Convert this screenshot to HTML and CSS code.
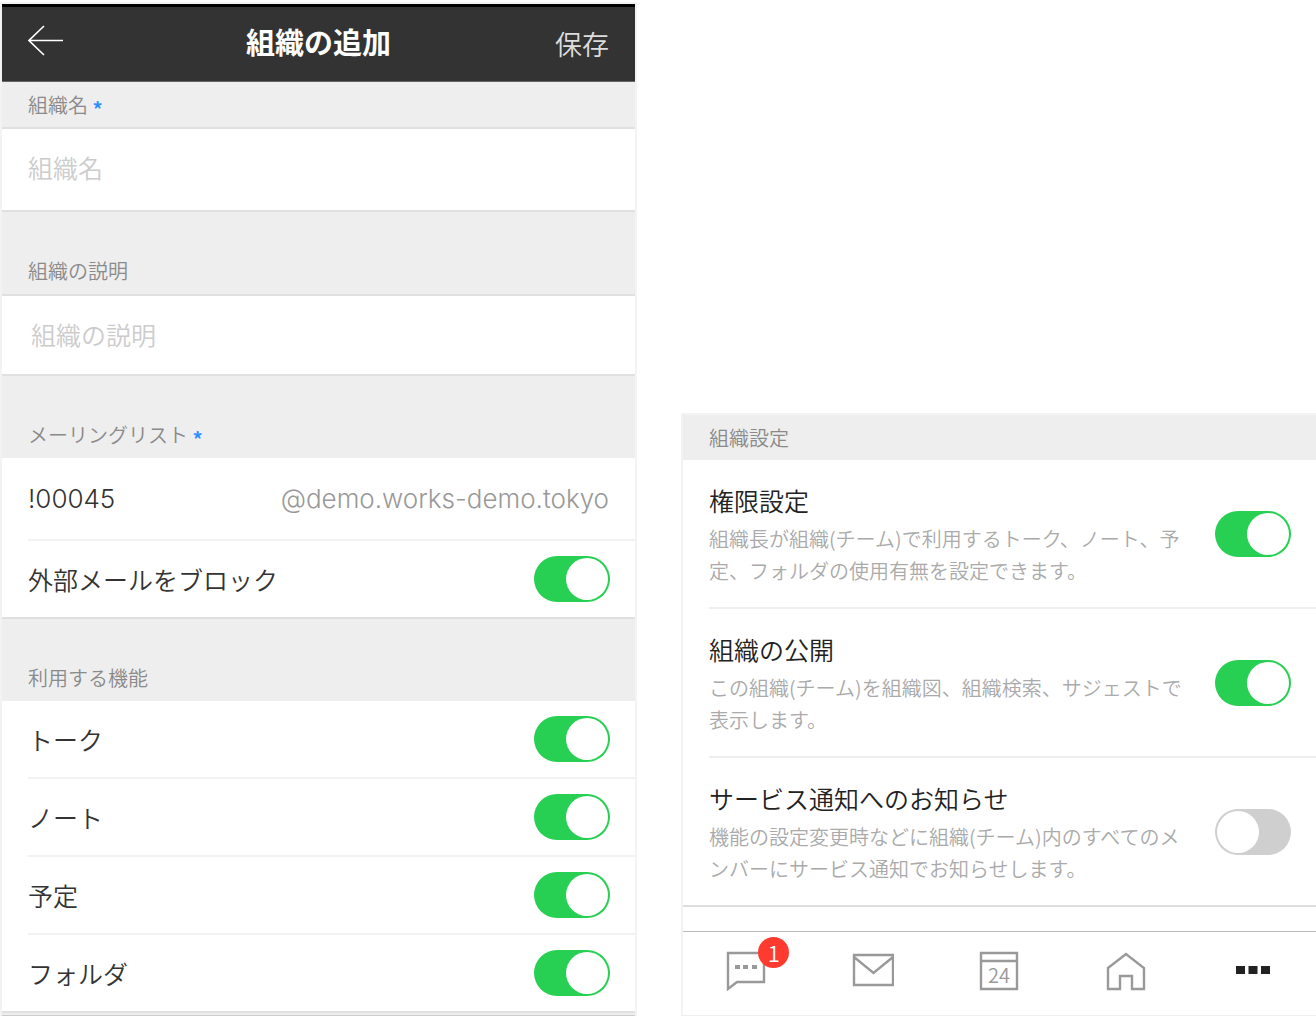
FILE: index.html
```html
<!DOCTYPE html>
<html lang="ja">
<head>
    <meta charset="UTF-8">
    <meta name="viewport" content="width=device-width, initial-scale=1">
    <title>組織の追加</title>
    <link rel="stylesheet" href="styles.css">
</head>
<body>
<div class="container">
    <form class="panel">
        <header class="header">
            <button type="button" class="back" aria-label="戻る">
                <svg width="36" height="38" viewBox="0 0 36 38"><path d="M16 1 L1 15.5 L16 30 M1 15.5 H35"/></svg>
            </button>
            <h1>組織の追加</h1>
            <button type="submit" class="save">保存</button>
        </header>

        <div class="head first"><label for="name">組織名</label> <span class="must">*</span></div>
        <div class="field name"><input type="text" id="name" placeholder="組織名"></div>

        <div class="head line"><label for="about">組織の説明</label></div>
        <div class="field about"><input type="text" id="about" placeholder="組織の説明"></div>

        <div class="head"><label for="mail">メーリングリスト</label> <span class="must">*</span></div>
        <div class="field mail">
            <input type="text" id="mail" value="!00045">
            <span class="domain">@demo.works-demo.tokyo</span>
        </div>
        <ul class="list">
            <li><label for="block">外部メールをブロック</label><input type="checkbox" class="switch" id="block" checked></li>
        </ul>

        <div class="head">利用する機能</div>
        <ul class="list">
            <li><label for="talk">トーク</label><input type="checkbox" class="switch" id="talk" checked></li>
            <li><label for="note">ノート</label><input type="checkbox" class="switch" id="note" checked></li>
            <li><label for="plan">予定</label><input type="checkbox" class="switch" id="plan" checked></li>
            <li><label for="folder">フォルダ</label><input type="checkbox" class="switch" id="folder" checked></li>
        </ul>
        <div class="end"></div>
    </form>

    <div class="panel setting">
        <div class="head first">組織設定</div>
        <ul class="options">
            <li>
                <div class="text">
                    <label for="auth">権限設定</label>
                    <p>組織長が組織(チーム)で利用するトーク、ノート、予定、フォルダの使用有無を設定できます。</p>
                </div>
                <input type="checkbox" class="switch" id="auth" checked>
            </li>
            <li>
                <div class="text">
                    <label for="open">組織の公開</label>
                    <p>この組織(チーム)を組織図、組織検索、サジェストで表示します。</p>
                </div>
                <input type="checkbox" class="switch" id="open" checked>
            </li>
            <li>
                <div class="text">
                    <label for="notice">サービス通知へのお知らせ</label>
                    <p>機能の設定変更時などに組織(チーム)内のすべてのメンバーにサービス通知でお知らせします。</p>
                </div>
                <input type="checkbox" class="switch" id="notice">
            </li>
        </ul>
        <nav class="tabs">
            <a href="#talk" aria-label="トーク">
                <span class="icon">
                    <svg width="42" height="42" viewBox="0 0 42 42">
                        <path d="M3 4 H39 V33 H12 L3 40 Z"/>
                        <path class="dot" d="M10 16h5v4h-5z M18 16h5v4h-5z M27 16h5v4h-5z"/>
                    </svg>
                    <span class="badge">1</span>
                </span>
            </a>
            <a href="#mail" aria-label="メール">
                <svg width="42" height="42" viewBox="0 0 42 42"><path d="M2 6 H41 V36 H2 Z M2 8 L21.5 24 L41 8"/></svg>
            </a>
            <a href="#plan" aria-label="予定">
                <svg width="42" height="42" viewBox="0 0 42 42">
                    <path d="M3 4 H39 V40 H3 Z M3 12 H39"/>
                    <text x="21" y="34">24</text>
                </svg>
            </a>
            <a href="#home" aria-label="ホーム">
                <svg width="42" height="42" viewBox="0 0 42 42"><path d="M3 19 L21 5 L39 19 V40 H27 V27 H15 V40 H3 Z"/></svg>
            </a>
            <a href="#more" class="active" aria-label="その他">
                <svg width="42" height="42" viewBox="0 0 42 42"><path class="dot" d="M4 17h9v8h-9z M16.500 17h9v8h-9z M29 17h9v8h-9z"/></svg>
            </a>
        </nav>
    </div>
</div>
</body>
</html>
```
FILE: styles.css
```css
* {
    margin: 0;
    padding: 0;
    box-sizing: border-box;
}

body {
    background-color: white;
    color: #333;
    font-family: "Noto Sans CJK JP", sans-serif;
    font-size: 25px;
    font-weight: 350;
}

ul {
    list-style: none;
}

button {
    border: none;
    background: none;
    color: inherit;
    font-family: inherit;
    cursor: pointer;
}

.container {
    display: grid;
    grid-template-columns: 637fr 635fr;
    column-gap: 44px;
    align-items: end;
    padding-top: 2px;
}

.panel {
    min-width: 0;
    border: 2px solid #f3f3f3;
    border-bottom: none;
}

/* 顶部标题栏 */
.header {
    display: grid;
    grid-template-columns: 1fr auto 1fr;
    align-items: center;
    height: 78px;
    padding: 0 26px;
    border-top: 3px solid black;
    border-bottom: 1px solid #666;
    background-color: #333;
    color: white;
}

.header h1 {
    font-size: 29px;
    line-height: 40px;
    padding-bottom: 6px;
}

.header .back {
    justify-self: start;
    height: 38px;
}

.header .back svg {
    display: block;
    fill: none;
    stroke: white;
    stroke-width: 1.6;
}

.header .save {
    justify-self: end;
    font-size: 27px;
    font-weight: 350;
    line-height: 40px;
    color: #ddd;
}

.head {
    padding: 48px 26px 12px;
    border-top: 2px solid #e0e0e0;
    background-color: #eee;
    color: #8a8a8a;
    font-size: 20px;
    line-height: 22px;
}

.head.line {
    border-bottom: 2px solid #e0e0e0;
}

.head.first {
    padding: 12px 26px 11px;
    border-top: none;
    border-bottom: 2px solid #e0e0e0;
}

.must {
    color: #2f8fff;
    font-size: 20px;
    font-weight: bold;
    line-height: 1px;
    vertical-align: -4px;
}

/* 输入框 */
.field {
    display: flex;
    align-items: center;
    padding: 0 26px;
}

.field input {
    flex: 1;
    min-width: 0;
    height: 40px;
    border: none;
    outline: none;
    background: none;
    color: #333;
    font-family: inherit;
    font-size: 25px;
    font-weight: inherit;
}

.field input::placeholder {
    color: #ccc;
}

.field.name {
    height: 81px;
    padding-bottom: 6px;
}

.field.about {
    height: 78px;
    padding-bottom: 2px;
    padding-left: 29px;
}

.field.mail {
    height: 81px;
}

.field.mail input,
.domain {
    font-family: Inter, "Noto Sans CJK JP", sans-serif;
    font-size: 26px;
}

.domain {
    color: #999;
}

.list {
    padding-left: 26px;
}

.list > li {
    display: flex;
    justify-content: space-between;
    align-items: center;
    height: 76px;
    padding-right: 25px;
}

.list > li + li,
.field.mail + .list > li {
    height: 78px;
    border-top: 2px solid #f2f2f2;
}

.switch {
    flex: none;
    width: 76px;
    height: 46px;
    padding: 2px;
    border-radius: 23px;
    background-color: #cfcfcf;
    appearance: none;
    cursor: pointer;
}

.switch::before {
    content: "";
    display: block;
    width: 42px;
    height: 42px;
    border-radius: 50%;
    background-color: white;
}

.switch:checked {
    background-color: #27d053;
}

.switch:checked::before {
    margin-left: auto;
}

.end {
    height: 5px;
    border-top: 2px solid #e0e0e0;
    border-bottom: 1px solid #ccc;
    background-color: #eee;
}

/* 右侧设置 */
.panel.setting {
    border-right: none;
    border-bottom: 1px solid #eee;
}

.setting .head.first {
    border-bottom: none;
}

.options > li {
    display: flex;
    align-items: center;
    justify-content: space-between;
    gap: 24px;
    margin-left: 26px;
    padding: 20px 25px 20px 0;
}

.options > li + li {
    border-top: 2px solid #eee;
}

.options {
    border-bottom: 2px solid #ddd;
}

.options label {
    display: block;
    color: #222;
    line-height: 40px;
}

.options p {
    margin-top: 3px;
    color: #aaa;
    font-size: 20px;
    line-height: 32px;
}

.tabs {
    display: flex;
    margin-top: 24px;
    border-top: 1px solid #bbb;
}

.tabs a {
    flex: 1;
    display: flex;
    justify-content: center;
    padding: 17px 0 24px;
}

.tabs svg {
    display: block;
    fill: none;
    stroke: #999;
    stroke-width: 2.4;
}

.tabs .dot {
    fill: #999;
    stroke: none;
}

.tabs .active .dot {
    fill: #222;
}

.tabs text {
    fill: #999;
    stroke: none;
    font-size: 20px;
    text-anchor: middle;
}

.icon {
    position: relative;
}

.badge {
    position: absolute;
    top: -12px;
    right: -22px;
    width: 31px;
    height: 31px;
    border-radius: 50%;
    background-color: #ff3b30;
    color: white;
    font-size: 22px;
    line-height: 31px;
    text-align: center;
}
```
